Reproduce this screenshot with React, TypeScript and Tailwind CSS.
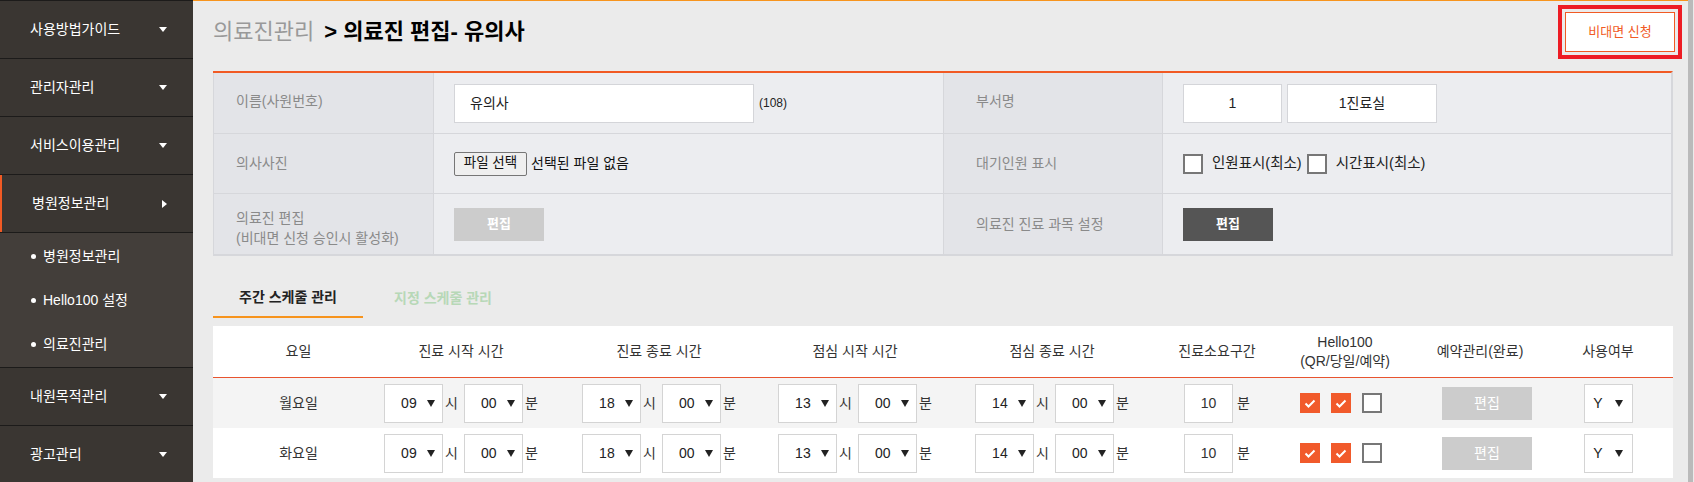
import React from "react";

const FONT = "font-['Liberation_Sans','Noto_Sans_CJK_KR',sans-serif]";

function Caret({ dir = "down" }: { dir?: "down" | "right" }) {
  if (dir === "right") {
    return (
      <svg width="5" height="8" viewBox="0 0 5 8" className="block">
        <path d="M0 0 L5 4 L0 8 Z" fill="#fff" />
      </svg>
    );
  }
  return (
    <svg width="8" height="5" viewBox="0 0 8 5" className="block">
      <path d="M0 0 L8 0 L4 5 Z" fill="#fff" />
    </svg>
  );
}

function Tri() {
  return (
    <svg width="8" height="7" viewBox="0 0 8 7" className="block">
      <path d="M0 0 L8 0 L4 7 Z" fill="#222" />
    </svg>
  );
}

function NavItem({ label, active, dir = "down" }: { label: string; active?: boolean; dir?: "down" | "right" }) {
  return (
    <div className="border-t border-[#1c1b1a]">
      <div
        className={`h-[57px] flex items-center justify-between pl-[30px] pr-[26px] text-[14px] text-white ${
          active ? "border-l-2 border-[#f15a24] pl-[28px]" : ""
        }`}
      >
        <span>{label}</span>
        <Caret dir={dir} />
      </div>
    </div>
  );
}

function SubItem({ label }: { label: string }) {
  return (
    <div className="h-[44px] flex items-center pl-[31px] text-[14px] text-white gap-[7px]">
      <span className="w-[5px] h-[5px] rounded-full bg-white" />
      <span>{label}</span>
    </div>
  );
}

function Sidebar() {
  return (
    <aside className="w-[193px] shrink-0 bg-[#3a3632] h-full">
      <NavItem label="사용방법가이드" />
      <NavItem label="관리자관리" />
      <NavItem label="서비스이용관리" />
      <NavItem label="병원정보관리" active dir="right" />
      <div className="border-t border-[#1c1b1a] bg-[#433e3a] h-[135px] pt-[1px]">
        <SubItem label="병원정보관리" />
        <SubItem label="Hello100 설정" />
        <SubItem label="의료진관리" />
      </div>
      <NavItem label="내원목적관리" />
      <NavItem label="광고관리" />
    </aside>
  );
}

function Sel({ v }: { v: string }) {
  return (
    <div className="w-[59px] h-[39px] bg-white border border-[#d4d4d4] flex items-center pl-[16px] gap-[10px] text-[14px] text-[#222]">
      <span>{v}</span>
      <Tri />
    </div>
  );
}

function TimePair({ h, m }: { h: string; m: string }) {
  return (
    <div className="flex items-center text-[14px] text-[#333] whitespace-nowrap">
      <Sel v={h} />
      <span className="ml-[2px] mr-[6px]">시</span>
      <Sel v={m} />
      <span className="ml-[2px]">분</span>
    </div>
  );
}

function Checked() {
  return (
    <span className="w-[20px] h-[20px] bg-[#f15a2b] flex items-center justify-center">
      <svg width="12" height="9" viewBox="0 0 12 9">
        <path d="M1.5 4.5 L4.5 7.5 L10.5 1.5" stroke="#fff" strokeWidth="2" fill="none" />
      </svg>
    </span>
  );
}

function Unchecked() {
  return <span className="w-[20px] h-[20px] border-2 border-[#777] bg-white block shrink-0" />;
}

const COLS = "grid grid-cols-[171px_154px_242px_150px_244px_86px_164px_122px_124px_1fr]";

function DayRow({ day, bg }: { day: string; bg: string }) {
  return (
    <div className={`${COLS} h-[50px] items-center justify-items-center ${bg}`}>
      <span className="text-[14px] text-[#333]">{day}</span>
      <TimePair h="09" m="00" />
      <TimePair h="18" m="00" />
      <TimePair h="13" m="00" />
      <TimePair h="14" m="00" />
      <div className="flex items-center text-[14px] text-[#333] whitespace-nowrap">
        <div className="w-[49px] h-[39px] bg-white border border-[#d4d4d4] flex items-center justify-center">10</div>
        <span className="ml-[4px]">분</span>
      </div>
      <div className="flex items-center gap-[11px] -ml-[2px]">
        <Checked />
        <Checked />
        <Unchecked />
      </div>
      <button className="w-[90px] h-[33px] bg-[#cccccc] text-white text-[14px] ml-[4px]">편집</button>
      <div className="w-[49px] h-[39px] bg-white border border-[#d4d4d4] flex items-center justify-center gap-[12px] text-[14px] text-[#222]">
        <span>Y</span>
        <Tri />
      </div>
      <span />
    </div>
  );
}

function FormCell({ w, label, children, className = "" }: { w: string; label?: boolean; children: React.ReactNode; className?: string }) {
  return (
    <div
      className={`${w} shrink-0 h-full flex items-center border-l border-[#d6d7db] ${
        label ? "bg-[#e3e4e8] text-[14px] text-[#8a8a8a]" : "bg-[#ecedf0]"
      } ${className}`}
    >
      {children}
    </div>
  );
}

export default function App() {
  return (
    <div className={`${FONT} w-[1694px] h-[482px] flex overflow-hidden bg-[#ebebeb]`}>
      <Sidebar />
      <main className="flex-1 border-t border-[#f7941d] min-w-0">
        <div className="h-[55px] mt-[3px] flex items-center justify-between pl-[20px] pr-[6px]">
          <h1 className="text-[22px] text-black flex items-center gap-[10px]">
            <span className="text-[#999]">의료진관리</span>
            <span className="font-bold">&gt; 의료진 편집- 유의사</span>
          </h1>
          <div className="border-[4px] border-[#ed1c24] p-[3px]">
            <button className="w-[110px] h-[40px] bg-white border border-[#f15a24] text-[13px] text-[#f15a24]">
              비대면 신청
            </button>
          </div>
        </div>

        <div className="pl-[20px] pr-[15px] mt-[12px]">
          <section className="border-t-2 border-[#f15a24] border-r-2 border-b-2 border-r-[#d6d7db] border-b-[#d6d7db]">
            <div className="flex h-[61px] border-b border-[#d6d7db]">
              <FormCell w="w-[220px]" label className="pl-[22px] pb-[3px]">이름(사원번호)</FormCell>
              <FormCell w="w-[510px]" className="pl-[20px]">
                <div className="w-[300px] h-[39px] bg-white border border-[#d4d5d9] flex items-center pl-[15px] text-[14px] text-[#222]">
                  유의사
                </div>
                <span className="ml-[5px] text-[12px] text-[#222]">(108)</span>
              </FormCell>
              <FormCell w="w-[219px]" label className="pl-[32px] pb-[3px]">부서명</FormCell>
              <FormCell w="flex-1" className="pl-[20px] gap-[5px]">
                <div className="w-[99px] h-[39px] bg-white border border-[#d4d5d9] flex items-center justify-center text-[14px] text-[#222]">1</div>
                <div className="w-[150px] h-[39px] bg-white border border-[#d4d5d9] flex items-center justify-center text-[14px] text-[#222]">1진료실</div>
              </FormCell>
            </div>
            <div className="flex h-[60px] border-b border-[#d6d7db]">
              <FormCell w="w-[220px]" label className="pl-[22px]">의사사진</FormCell>
              <FormCell w="w-[510px]" className="pl-[20px] text-[14px] text-[#111]">
                <span className="w-[73px] h-[24px] flex items-center justify-center border border-[#767676] rounded-[2px] bg-[#efefef] text-[13.5px]">파일 선택</span>
                <span className="ml-[4px]">선택된 파일 없음</span>
              </FormCell>
              <FormCell w="w-[219px]" label className="pl-[32px]">대기인원 표시</FormCell>
              <FormCell w="flex-1" className="pl-[20px] text-[14.5px] text-[#222]">
                <Unchecked />
                <span className="ml-[9px]">인원표시(최소)</span>
                <span className="ml-[5px]"><Unchecked /></span>
                <span className="ml-[9px]">시간표시(최소)</span>
              </FormCell>
            </div>
            <div className="flex h-[60px]">
              <FormCell w="w-[220px]" label className="pl-[22px]">
                <div className="leading-[20px] pt-[8px]">
                  의료진 편집
                  <br />
                  (비대면 신청 승인시 활성화)
                </div>
              </FormCell>
              <FormCell w="w-[510px]" className="pl-[20px]">
                <button className="w-[90px] h-[33px] bg-[#cccccc] text-white text-[13px] font-bold">편집</button>
              </FormCell>
              <FormCell w="w-[219px]" label className="pl-[32px]">의료진 진료 과목 설정</FormCell>
              <FormCell w="flex-1" className="pl-[20px]">
                <button className="w-[90px] h-[33px] bg-[#555555] text-white text-[13px] font-bold">편집</button>
              </FormCell>
            </div>
          </section>

          <div className="flex gap-[5px] mt-[22px]">
            <div className="w-[150px] h-[40px] flex items-center justify-center border-b-2 border-[#f7941d] text-[14px] font-bold text-[#222]">
              주간 스케줄 관리
            </div>
            <div className="w-[150px] h-[40px] flex items-center justify-center text-[14px] font-bold text-[#b7d8b7]">
              지정 스케줄 관리
            </div>
          </div>

          <section className="mt-[8px] bg-white">
            <div className={`${COLS} h-[52px] items-center justify-items-center border-b border-[#e8542f] text-[14px] text-[#333]`}>
              <span>요일</span>
              <span className="whitespace-nowrap">진료 시작 시간</span>
              <span className="whitespace-nowrap">진료 종료 시간</span>
              <span className="whitespace-nowrap">점심 시작 시간</span>
              <span className="whitespace-nowrap">점심 종료 시간</span>
              <span className="whitespace-nowrap">진료소요구간</span>
              <span className="text-center leading-[19px] ml-[6px] whitespace-nowrap">
                Hello100
                <br />
                (QR/당일/예약)
              </span>
              <span className="-ml-[10px] whitespace-nowrap">예약관리(완료)</span>
              <span className="whitespace-nowrap">사용여부</span>
              <span />
            </div>
            <DayRow day="월요일" bg="bg-[#f4f4f4]" />
            <DayRow day="화요일" bg="bg-white" />
          </section>
        </div>
      </main>
      <div className="w-[5px] h-full bg-[#bababa]" />
      <div className="w-[1px] h-full bg-[#ebebeb]" />
    </div>
  );
}
